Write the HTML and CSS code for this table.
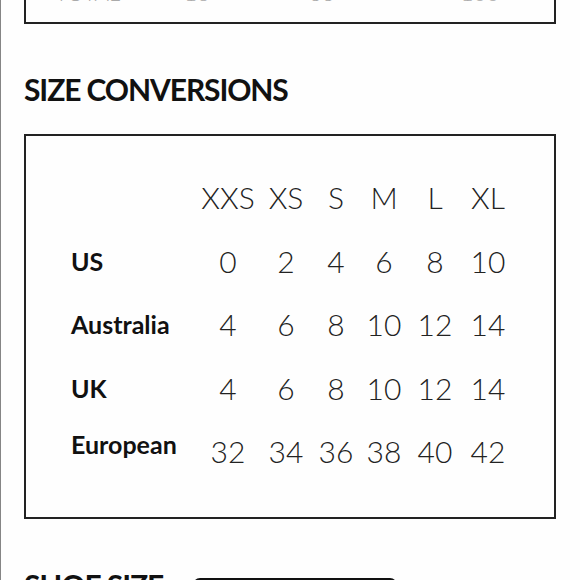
FILE: index.html
```html
<!DOCTYPE html>
<html lang="en">
<head>
<meta charset="utf-8">
<title>Size Conversions</title>
<link rel="stylesheet" href="styles.css">
</head>
<body>
<div class="page">
  <div class="prev-box">
    <div class="prev-row">
      <span class="prev-label">TOTAL</span>
      <span class="prev-cell">16</span>
      <span class="prev-cell">33</span>
      <span class="prev-cell">100</span>
    </div>
  </div>

  <h2 class="section-title">SIZE CONVERSIONS</h2>

  <div class="table-box">
    <div class="size-grid">
      <span class="label"></span>
      <span class="val">XXS</span><span class="val">XS</span><span class="val">S</span><span class="val">M</span><span class="val">L</span><span class="val">XL</span>

      <span class="label">US</span>
      <span class="val">0</span><span class="val">2</span><span class="val">4</span><span class="val">6</span><span class="val">8</span><span class="val">10</span>

      <span class="label">Australia</span>
      <span class="val">4</span><span class="val">6</span><span class="val">8</span><span class="val">10</span><span class="val">12</span><span class="val">14</span>

      <span class="label">UK</span>
      <span class="val">4</span><span class="val">6</span><span class="val">8</span><span class="val">10</span><span class="val">12</span><span class="val">14</span>

      <span class="label lift">European</span>
      <span class="val">32</span><span class="val">34</span><span class="val">36</span><span class="val">38</span><span class="val">40</span><span class="val">42</span>
    </div>
  </div>

  <div class="shoe-row">
    <h2 class="section-title shoe-title">SHOE SIZE</h2>
    <div class="shoe-select"></div>
  </div>
</div>
</body>
</html>
```

FILE: styles.css
```css
html, body {
  margin: 0;
  padding: 0;
  background: #fefefe;
}

body {
  font-family: Lato, "Open Sans", sans-serif;
  color: #1c1c1c;
  overflow: hidden;
}

.page {
  border-left: 1px solid #858585;
  min-height: 640px;
  padding: 0 23px;
}

.prev-box {
  margin-top: -40px;
  width: 528px;
  height: 40px;
  border: 2px solid #222;
  padding: 20px 0 0 29px;
  box-sizing: content-box;
  width: 499px;
}

.prev-row {
  display: grid;
  grid-template-columns: 112px 60px 190px 126px;
  font-size: 22px;
  font-weight: 300;
  line-height: 22px;
  color: #aaa;
}

.prev-cell {
  text-align: center;
}

.section-title {
  margin: 47px 0 0;
  font-size: 30px;
  line-height: 36px;
  font-weight: 700;
  letter-spacing: -1.1px;
  color: #111;
}

.table-box {
  margin-top: 27px;
  width: 483px;
  height: 351px;
  border: 2px solid #222;
  padding: 30px 0 0 45px;
  box-sizing: content-box;
}

.size-grid {
  display: grid;
  grid-template-columns: 128px 58px 58px 42px 54px 48px 58px;
  grid-auto-rows: 63.5px;
  align-items: center;
}

.label {
  font-size: 25px;
  font-weight: 700;
  line-height: 63.5px;
  color: #111;
}

.label.lift {
  transform: translateY(-7px);
}

.val {
  text-align: center;
  font-size: 30px;
  font-weight: 300;
  line-height: 63.5px;
  color: #222;
}

.shoe-row {
  display: flex;
  align-items: flex-start;
  gap: 30px;
  margin-top: 48px;
}

.shoe-title {
  margin: 0;
}

.shoe-select {
  margin-top: 11px;
  width: 198px;
  height: 30px;
  border: 3px solid #111;
  border-radius: 7px;
}
```
